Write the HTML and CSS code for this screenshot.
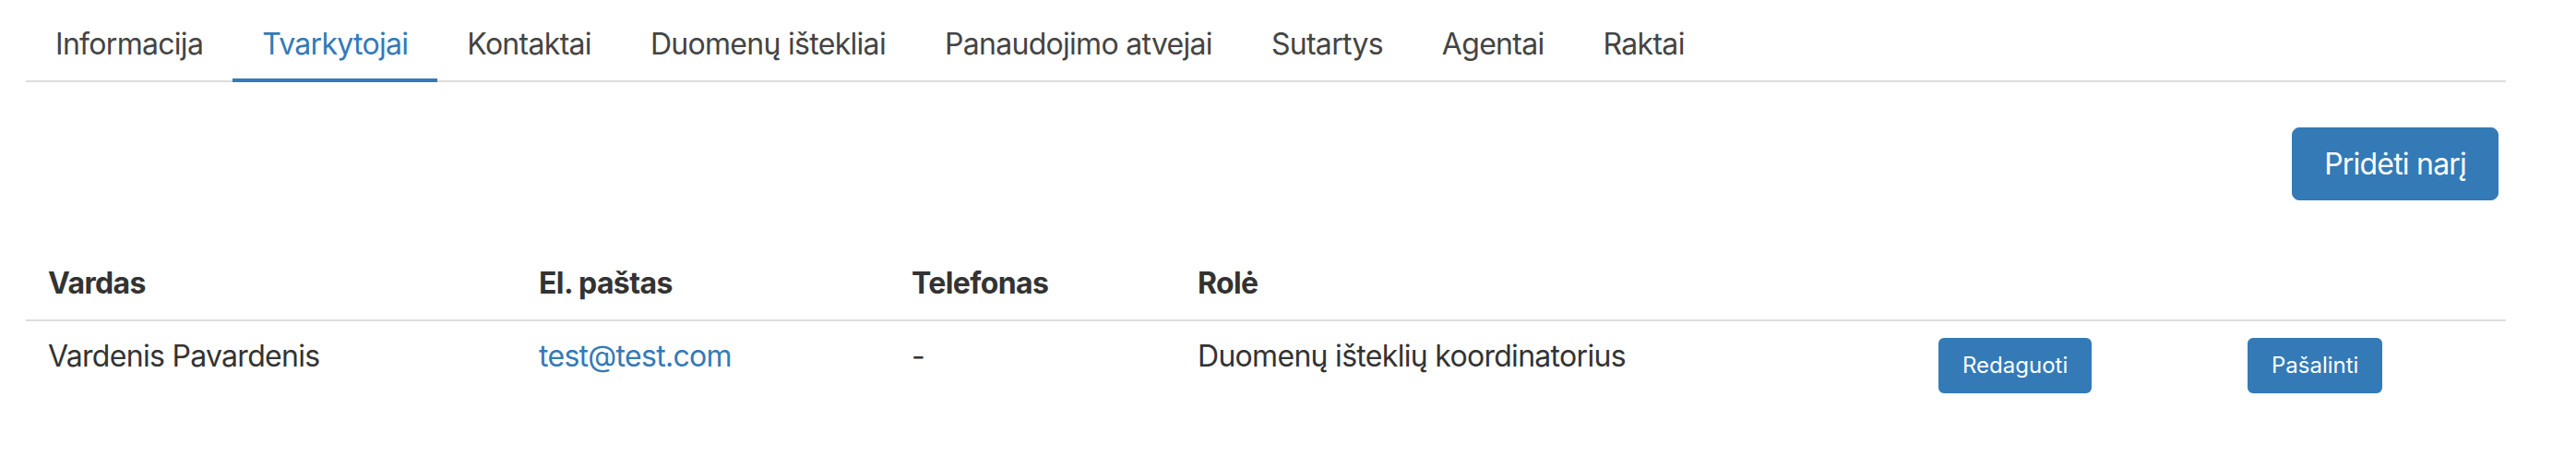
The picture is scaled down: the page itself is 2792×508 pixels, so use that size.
FILE: index.html
```html
<!DOCTYPE html>
<html lang="lt">
<head>
<meta charset="utf-8">
<title>Tvarkytojai</title>
<link rel="stylesheet" href="styles.css">
</head>
<body>
<div class="page">
  <nav class="tabs">
    <a class="tab" href="#">Informacija</a>
    <a class="tab active" href="#">Tvarkytojai</a>
    <a class="tab" href="#">Kontaktai</a>
    <a class="tab" href="#">Duomenų ištekliai</a>
    <a class="tab" href="#">Panaudojimo atvejai</a>
    <a class="tab" href="#">Sutartys</a>
    <a class="tab" href="#">Agentai</a>
    <a class="tab" href="#">Raktai</a>
  </nav>
  <div class="toolbar">
    <button class="btn btn-primary" type="button">Pridėti narį</button>
  </div>
  <table class="members">
    <colgroup>
      <col class="c-name"><col class="c-mail"><col class="c-phone"><col class="c-role"><col class="c-edit"><col class="c-del">
    </colgroup>
    <thead>
      <tr><th>Vardas</th><th>El. paštas</th><th>Telefonas</th><th>Rolė</th><th></th><th></th></tr>
    </thead>
    <tbody>
      <tr>
        <td>Vardenis Pavardenis</td>
        <td><a class="link" href="#">test@test.com</a></td>
        <td>-</td>
        <td>Duomenų išteklių koordinatorius</td>
        <td><button class="btn btn-sm" type="button">Redaguoti</button></td>
        <td><button class="btn btn-sm" type="button">Pašalinti</button></td>
      </tr>
    </tbody>
  </table>
</div>
</body>
</html>
```
FILE: styles.css
```css
html, body { margin: 0; padding: 0; background: #fff; }
body {
  font-family: Inter, "Noto Sans", sans-serif;
  font-size: 32px;
  color: #333;
  letter-spacing: -0.7px;
}
.page { width: 2688px; padding-left: 28px; }

.tabs {
  display: flex;
  border-bottom: 2px solid #ddd;
}
.tab {
  display: block;
  padding: 24px 32px 13px;
  line-height: 48px;
  color: #444;
  text-decoration: none;
  border-bottom: 4px solid transparent;
  margin-bottom: -2px;
}
.tab.active { color: #337ab7; border-bottom-color: #337ab7; }

.toolbar {
  display: flex;
  justify-content: flex-end;
  padding-right: 8px;
  margin-top: 49px;
}
.btn {
  font-family: Inter, "Noto Sans", sans-serif;
  background: #337ab7;
  color: #fff;
  border: 1px solid #337ab7;
  cursor: pointer;
}
.btn-primary {
  font-size: 32px;
  letter-spacing: -0.8px;
  line-height: 47px;
  padding: 15px 34px;
  border-radius: 8px;
}
.btn-sm {
  font-size: 24px;
  letter-spacing: 0;
  line-height: 36px;
  padding: 10px 24px;
  border-width: 2px;
  border-radius: 6px;
}

.members {
  width: 2688px;
  margin-top: 54px;
  border-collapse: collapse;
  table-layout: fixed;
}
.c-name { width: 532px; }
.c-mail { width: 404px; }
.c-phone { width: 310px; }
.c-role { width: 803px; }
.c-edit { width: 335px; }
.c-del { width: 304px; }

.members th {
  text-align: left;
  font-weight: 700;
  letter-spacing: -0.6px;
  line-height: 40px;
  padding: 16px 24px 19px;
  border-bottom: 2px solid #ddd;
}
.members td {
  vertical-align: top;
  line-height: 40px;
  padding: 18px 24px 16px;
}
.link { color: #337ab7; text-decoration: none; }
```
